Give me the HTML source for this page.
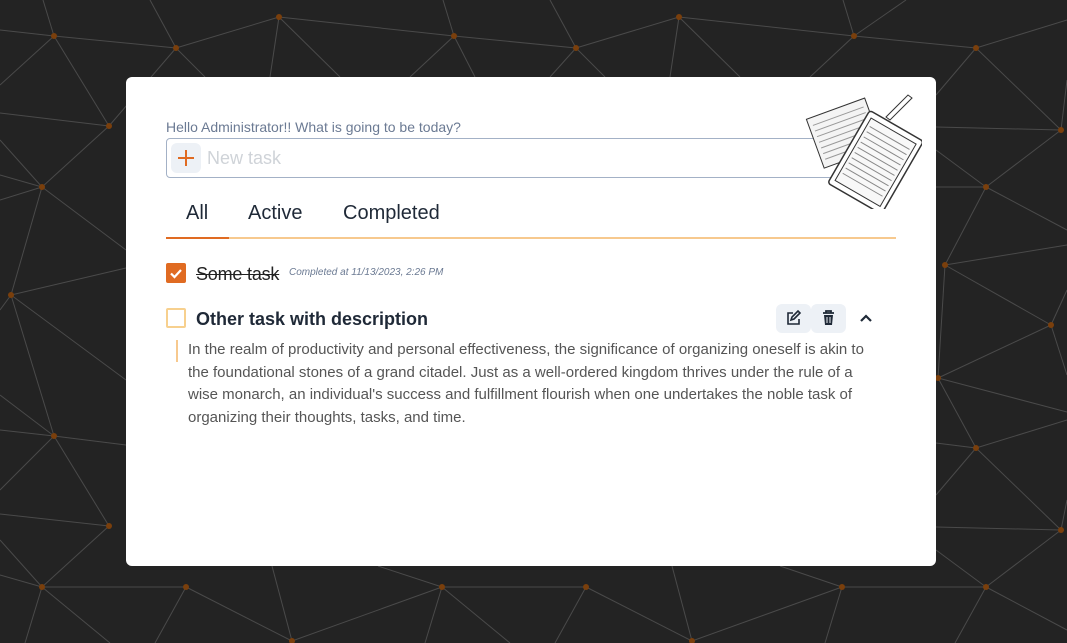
<!DOCTYPE html>
<html><head><meta charset="utf-8"><style>
html,body{margin:0;padding:0;width:1067px;height:643px;overflow:hidden;background:#232323;font-family:"Liberation Sans",sans-serif}
svg.bg{position:absolute;left:0;top:0}
.card{position:absolute;left:126px;top:77px;width:810px;height:489px;background:#fff;border-radius:6px}
.hello{position:absolute;left:40px;top:42px;font-size:14px;color:#6b7a93}
.input{position:absolute;left:40px;top:61px;width:690px;height:38px;border:1px solid #a3b1c6;border-radius:4px}
.plus{position:absolute;left:4px;top:4px;width:30px;height:30px;background:#edf1f6;border-radius:6px}
.ph{position:absolute;left:40px;top:9px;font-size:18px;color:#cfd3d8}
.tabs{position:absolute;left:40px;top:124px;width:730px;height:36px;border-bottom:2px solid #f7c98e}
.tab{position:absolute;top:1px;font-size:20px;color:#1f2937}
.ul{position:absolute;left:0;bottom:-2px;width:63px;height:2px;background:#e06b22}
.cb{position:absolute;width:20px;height:20px;border-radius:2px;box-sizing:border-box}
.t1{position:absolute;left:70px;top:187px;font-size:18px;color:#222;text-decoration:line-through;letter-spacing:-0.2px}
.meta{position:absolute;left:163px;top:190px;font-size:10px;font-style:italic;color:#6b7a93}
.t2{position:absolute;left:70px;top:232px;font-size:18px;font-weight:bold;color:#1f2937}
.btn{position:absolute;top:227px;width:35px;height:29px;background:#edf1f6;border-radius:6px}
.desc{position:absolute;left:62px;top:262px;width:690px;font-size:15px;line-height:22.5px;color:#555}
.bar{position:absolute;left:50px;top:263px;width:2px;height:22px;background:#f7c98e}
</style></head><body>
<svg class="bg" width="1067" height="643" stroke="#4a4a4a" stroke-width="1">
<g>
<line x1="0" y1="30" x2="54" y2="36"/><line x1="54" y1="36" x2="176" y2="48"/><line x1="176" y1="48" x2="279" y2="17"/><line x1="279" y1="17" x2="454" y2="36"/><line x1="454" y1="36" x2="576" y2="48"/><line x1="576" y1="48" x2="679" y2="17"/><line x1="679" y1="17" x2="854" y2="36"/><line x1="854" y1="36" x2="976" y2="48"/><line x1="976" y1="48" x2="1067" y2="20"/>
<line x1="54" y1="36" x2="109" y2="126"/><line x1="54" y1="36" x2="0" y2="85"/><line x1="43" y1="0" x2="54" y2="36"/><line x1="150" y1="0" x2="176" y2="48"/><line x1="176" y1="48" x2="109" y2="126"/><line x1="0" y1="113" x2="109" y2="126"/><line x1="109" y1="126" x2="42" y2="187"/><line x1="0" y1="140" x2="42" y2="187"/><line x1="0" y1="175" x2="42" y2="187"/><line x1="42" y1="187" x2="126" y2="250"/><line x1="42" y1="187" x2="11" y2="295"/><line x1="0" y1="200" x2="42" y2="187"/><line x1="11" y1="295" x2="126" y2="268"/><line x1="11" y1="295" x2="54" y2="436"/><line x1="11" y1="295" x2="126" y2="380"/><line x1="0" y1="310" x2="11" y2="295"/><line x1="0" y1="395" x2="54" y2="436"/><line x1="0" y1="430" x2="54" y2="436"/><line x1="54" y1="436" x2="126" y2="445"/><line x1="54" y1="436" x2="109" y2="526"/><line x1="54" y1="436" x2="0" y2="490"/><line x1="0" y1="514" x2="109" y2="526"/><line x1="109" y1="526" x2="42" y2="587"/><line x1="0" y1="540" x2="42" y2="587"/><line x1="0" y1="575" x2="42" y2="587"/><line x1="42" y1="587" x2="186" y2="587"/><line x1="42" y1="587" x2="25" y2="643"/><line x1="42" y1="587" x2="110" y2="643"/><line x1="186" y1="587" x2="292" y2="641"/><line x1="186" y1="587" x2="155" y2="643"/><line x1="272" y1="566" x2="292" y2="641"/><line x1="292" y1="641" x2="442" y2="587"/><line x1="442" y1="587" x2="586" y2="587"/><line x1="442" y1="587" x2="425" y2="643"/><line x1="442" y1="587" x2="510" y2="643"/><line x1="378" y1="566" x2="442" y2="587"/><line x1="586" y1="587" x2="692" y2="641"/><line x1="586" y1="587" x2="555" y2="643"/><line x1="672" y1="566" x2="692" y2="641"/><line x1="692" y1="641" x2="842" y2="587"/><line x1="842" y1="587" x2="986" y2="587"/><line x1="842" y1="587" x2="825" y2="643"/><line x1="780" y1="566" x2="842" y2="587"/><line x1="986" y1="587" x2="1061" y2="530"/><line x1="986" y1="587" x2="1067" y2="630"/><line x1="986" y1="587" x2="955" y2="643"/><line x1="936" y1="527" x2="1061" y2="530"/><line x1="1061" y1="530" x2="1067" y2="500"/><line x1="936" y1="550" x2="986" y2="587"/>
<line x1="976" y1="48" x2="1061" y2="130"/><line x1="976" y1="48" x2="936" y2="95"/><line x1="936" y1="127" x2="1061" y2="130"/><line x1="1061" y1="130" x2="986" y2="187"/><line x1="1061" y1="130" x2="1067" y2="80"/><line x1="936" y1="187" x2="986" y2="187"/><line x1="986" y1="187" x2="1067" y2="230"/><line x1="986" y1="187" x2="945" y2="265"/><line x1="936" y1="150" x2="986" y2="187"/><line x1="945" y1="265" x2="1067" y2="245"/><line x1="945" y1="265" x2="1051" y2="325"/><line x1="945" y1="265" x2="938" y2="378"/><line x1="1051" y1="325" x2="1067" y2="290"/><line x1="1051" y1="325" x2="938" y2="378"/><line x1="1051" y1="325" x2="1067" y2="375"/><line x1="938" y1="378" x2="976" y2="448"/><line x1="938" y1="378" x2="1067" y2="412"/><line x1="976" y1="448" x2="1067" y2="420"/><line x1="936" y1="443" x2="976" y2="448"/><line x1="976" y1="448" x2="1061" y2="530"/><line x1="976" y1="448" x2="936" y2="495"/>
<line x1="279" y1="17" x2="270" y2="77"/><line x1="279" y1="17" x2="340" y2="77"/><line x1="454" y1="36" x2="410" y2="77"/><line x1="454" y1="36" x2="475" y2="77"/><line x1="576" y1="48" x2="550" y2="77"/><line x1="576" y1="48" x2="605" y2="77"/><line x1="679" y1="17" x2="670" y2="77"/><line x1="679" y1="17" x2="740" y2="77"/><line x1="854" y1="36" x2="810" y2="77"/><line x1="854" y1="36" x2="843" y2="0"/><line x1="854" y1="36" x2="906" y2="0"/><line x1="443" y1="0" x2="454" y2="36"/><line x1="550" y1="0" x2="576" y2="48"/><line x1="176" y1="48" x2="205" y2="77"/>
</g>
<g fill="#7a3f0c" stroke="none">
<circle cx="54" cy="36" r="3"/><circle cx="176" cy="48" r="3"/><circle cx="279" cy="17" r="3"/><circle cx="454" cy="36" r="3"/><circle cx="576" cy="48" r="3"/><circle cx="679" cy="17" r="3"/><circle cx="854" cy="36" r="3"/><circle cx="976" cy="48" r="3"/><circle cx="109" cy="126" r="3"/><circle cx="42" cy="187" r="3"/><circle cx="11" cy="295" r="3"/><circle cx="54" cy="436" r="3"/><circle cx="109" cy="526" r="3"/><circle cx="42" cy="587" r="3"/><circle cx="186" cy="587" r="3"/><circle cx="292" cy="641" r="3"/><circle cx="442" cy="587" r="3"/><circle cx="586" cy="587" r="3"/><circle cx="692" cy="641" r="3"/><circle cx="842" cy="587" r="3"/><circle cx="986" cy="587" r="3"/><circle cx="1061" cy="130" r="3"/><circle cx="986" cy="187" r="3"/><circle cx="945" cy="265" r="3"/><circle cx="1051" cy="325" r="3"/><circle cx="938" cy="378" r="3"/><circle cx="976" cy="448" r="3"/><circle cx="1061" cy="530" r="3"/>
</g></svg>
<div class="card">
<div class="hello">Hello Administrator!! What is going to be today?</div>
<div class="input"><div class="plus"><svg width="30" height="30"><path d="M15 7v16M7 15h16" stroke="#e06b22" stroke-width="2"/></svg></div><div class="ph">New task</div></div>
<svg style="position:absolute;left:678px;top:12px" width="118" height="120" fill="none" stroke="#333" stroke-width="1">
<g transform="rotate(-20 40 40)"><rect x="8" y="18" width="62" height="52" fill="#f4f4f4"/><path d="M12 26h54M12 32h54M12 38h54M12 44h54M12 50h54M12 56h54M12 62h54" stroke="#999"/></g>
<g transform="rotate(30 70 70)"><rect x="42" y="30" width="62" height="84" rx="3" fill="#fff" stroke-width="1.5"/><rect x="47" y="36" width="52" height="72" fill="#f8f8f8"/><path d="M50 44h46M50 50h46M50 56h46M50 62h46M50 68h46M50 74h46M50 80h46M50 86h46M50 92h46M50 98h46" stroke="#888"/></g>
<path d="M82 28l22-22 4 3-22 22z" fill="#fff"/>
</svg>
<div class="tabs">
<div class="tab" style="left:20px">All</div><div class="tab" style="left:82px">Active</div><div class="tab" style="left:177px">Completed</div>
<div class="ul"></div></div>
<div class="cb" style="left:40px;top:186px;background:#e06b22"><svg width="20" height="20"><path d="M5 10.5l3.5 3.5 6.5-7" stroke="#fff" stroke-width="2.2" fill="none"/></svg></div>
<div class="t1">Some task</div>
<div class="meta">Completed at 11/13/2023, 2:26 PM</div>
<div class="cb" style="left:40px;top:231px;border:2px solid #f7d08e"></div>
<div class="t2">Other task with description</div>
<div class="btn" style="left:650px"><svg width="35" height="29" fill="none" stroke="#1f2937" stroke-width="1.6"><path d="M17 9h-5v11h11v-5M15 16l1-3 6-6 2 2-6 6z"/></svg></div>
<div class="btn" style="left:685px"><svg width="35" height="29"><path d="M12 9h11M15 9V7h5v2" stroke="#1f2937" stroke-width="1.8" fill="none"/><path d="M13 11h9l-1 10h-7z" fill="#1f2937"/><path d="M16 13v6M19 13v6" stroke="#edf1f6" stroke-width="1"/></svg></div>
<svg style="position:absolute;left:732px;top:233px" width="16" height="16"><path d="M3 11l5-5 5 5" stroke="#1f2937" stroke-width="2.2" fill="none"/></svg>
<div class="bar"></div>
<div class="desc">In the realm of productivity and personal effectiveness, the significance of organizing oneself is akin to the foundational stones of a grand citadel. Just as a well-ordered kingdom thrives under the rule of a wise monarch, an individual's success and fulfillment flourish when one undertakes the noble task of organizing their thoughts, tasks, and time.</div>
</div>
</body></html>
